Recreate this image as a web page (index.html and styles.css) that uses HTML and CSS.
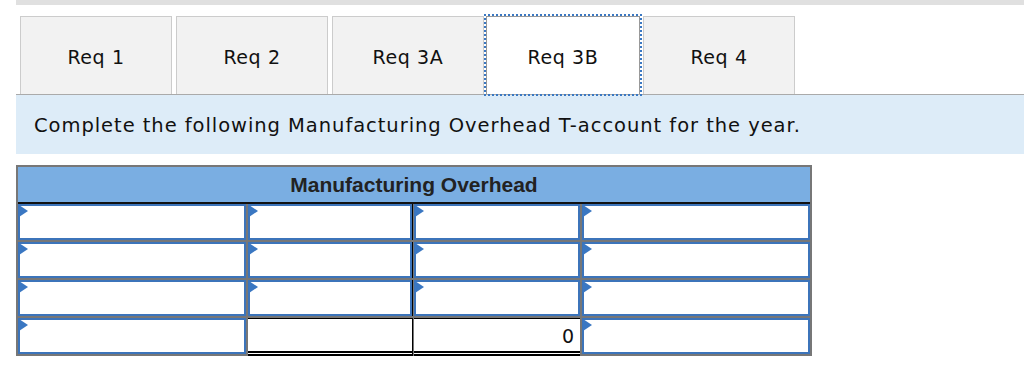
FILE: index.html
```html
<!DOCTYPE html>
<html>
	<head>
		<meta charset="utf-8">
		<title>Req 3B</title>
		<link rel="stylesheet" href="styles.css">
	</head>
	<body>
		<div class="topbar"></div>
		<div class="tabs">
			<a class="tab" href="javascript:;">Req 1</a>
			<a class="tab" href="javascript:;">Req 2</a>
			<a class="tab" href="javascript:;">Req 3A</a>
			<a class="tab active" href="javascript:;">Req 3B</a>
			<a class="tab" href="javascript:;">Req 4</a>
		</div>
		<div class="prompt">Complete the following Manufacturing Overhead T-account for the year.</div>

		<div class="taccount">
			<div class="title">Manufacturing Overhead</div>
			<div class="grid">
				<!-- debit side | credit side -->
				<div class="cell"><span class="flag"></span><input type="text"></div>
				<div class="cell mid"><span class="flag"></span><input type="text"></div>
				<div class="cell"><span class="flag"></span><input type="text"></div>
				<div class="cell"><span class="flag"></span><input type="text"></div>

				<div class="cell"><span class="flag"></span><input type="text"></div>
				<div class="cell mid"><span class="flag"></span><input type="text"></div>
				<div class="cell"><span class="flag"></span><input type="text"></div>
				<div class="cell"><span class="flag"></span><input type="text"></div>

				<div class="cell"><span class="flag"></span><input type="text"></div>
				<div class="cell mid"><span class="flag"></span><input type="text"></div>
				<div class="cell"><span class="flag"></span><input type="text"></div>
				<div class="cell"><span class="flag"></span><input type="text"></div>

				<div class="cell"><span class="flag"></span><input type="text"></div>
				<div class="cell mid total"></div>
				<div class="cell total amount">0</div>
				<div class="cell"><span class="flag"></span><input type="text"></div>
			</div>
		</div>
	</body>
</html>
```

FILE: styles.css
```css
*{
	padding: 0px;
	margin: 0px;
	box-sizing: border-box;
}
body{
	font-family: "DejaVu Sans", Verdana, sans-serif;
	color: #111;
	background: #fff;
}
.topbar{
	height: 5px;
	margin-left: 16px;
	background-color: #e0e0e0;
}
.tabs{
	display: flex;
	gap: 4px;
	margin: 11px 0px 0px 16px;
	padding-left: 4px;
	border-bottom: 1px solid #aaa;
}
.tab{
	width: 152px;
	height: 78px;
	display: flex;
	align-items: center;
	justify-content: center;
	padding-top: 3px;
	background-color: #f2f2f2;
	border: 1px solid #ccc;
	border-bottom: none;
	color: #111;
	font-size: 19px;
	letter-spacing: 0.6px;
	text-decoration: none;
}
.tab.active{
	width: 154px;
	margin: 0px -1px 0px -2px;
	background-color: #fff;
	border-color: #999;
	outline: 2px dotted #3b78c2;
	outline-offset: 0px;
}
.prompt{
	margin-left: 16px;
	height: 59px;
	padding: 19px 0px 0px 18px;
	background-color: #ddecf8;
	font-size: 19.5px;
	letter-spacing: 0.95px;
}
.taccount{
	width: 796px;
	margin: 11px 0px 0px 16px;
	border: 2px solid #777;
	border-bottom: none;
}
.title{
	height: 37px;
	padding-top: 6px;
	text-align: center;
	background-color: #7aaee2;
	border-bottom: 2px solid #111;
	font-family: "Liberation Sans", Arial, sans-serif;
	font-weight: bold;
	font-size: 21px;
	color: #222;
}
.grid{
	display: grid;
	grid-template-columns: 228px 164px 166px 228px;
	grid-auto-rows: 36px;
	gap: 2px;
	padding-bottom: 2px;
	background-color: #777;
}
.cell{
	position: relative;
	background-color: #fff;
}
.cell.mid{
	box-shadow: 1px 0px 0px #000;
}
.cell input{
	width: 100%;
	height: 100%;
	border: 2px solid #3c74ba;
	outline: none;
	font: inherit;
}
.flag{
	position: absolute;
	left: 1px;
	top: 1px;
	width: 0px;
	height: 0px;
	border-left: 9px solid #3a77c2;
	border-top: 6px solid transparent;
	border-bottom: 6px solid transparent;
}
.cell.total{
	border-top: 1px solid #000;
	border-bottom: 5px double #000;
	margin-bottom: -2px;
}
.cell.amount{
	text-align: right;
	padding: 6px 6px 0px 0px;
	font-size: 19px;
}
```
